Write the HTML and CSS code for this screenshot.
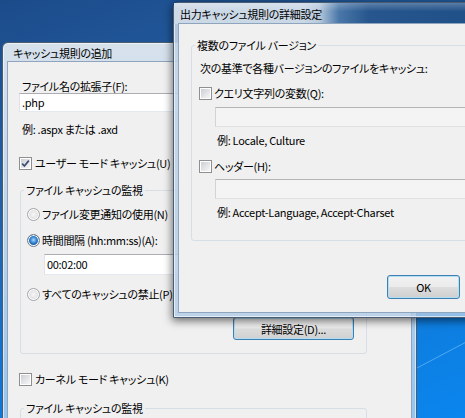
FILE: index.html
```html
<!DOCTYPE html>
<html lang="ja">
<head>
<meta charset="utf-8">
<link rel="stylesheet" href="styles.css">
</head>
<body>
<div class="desktop">
  <svg class="wallpaper" width="465" height="418" viewBox="0 0 465 418">
    <line x1="417" y1="368" x2="470" y2="340" stroke="#5fb4f4" stroke-width="1" opacity="0.8"/>
  </svg>

  <div class="win win-back">
    <div class="titlebar"><span class="title">キャッシュ規則の追加</span></div>
    <div class="client client-back">
      <div class="lbl ind14">ファイル名の拡張子(F):</div>
      <div class="tb tb-ext">.php</div>
      <div class="lbl ind14 hint-ext">例: .aspx または .axd</div>
      <div class="row row-user"><span class="cb"><svg width="9" height="9" viewBox="0 0 9 9"><polyline points="1.2,4.6 3.4,7 7.8,1.6" fill="none" stroke="#3d4d72" stroke-width="1.7"/></svg></span><span class="txt">ユーザー モード キャッシュ(U)</span></div>
      <fieldset class="group g1">
        <legend>ファイル キャッシュの監視</legend>
        <div class="row r1"><span class="rb"></span><span class="txt">ファイル変更通知の使用(N)</span></div>
        <div class="row r2"><span class="rb on"></span><span class="txt">時間間隔 (hh:mm:ss)(A):</span></div>
        <div class="tb tb-time">00:02:00</div>
        <div class="row r3"><span class="rb"></span><span class="txt">すべてのキャッシュの禁止(P)</span></div>
        <button class="btn btn-adv">詳細設定(D)...</button>
      </fieldset>
      <div class="row row-kernel"><span class="cb"></span><span class="txt">カーネル モード キャッシュ(K)</span></div>
      <fieldset class="group g2">
        <legend>ファイル キャッシュの監視</legend>
      </fieldset>
    </div>
  </div>

  <div class="win win-front">
    <div class="titlebar tb-active"><span class="title">出力キャッシュ規則の詳細設定</span></div>
    <div class="client client-front">
      <fieldset class="group gR">
        <legend>複数のファイル バージョン</legend>
        <div class="lbl intro">次の基準で各種バージョンのファイルをキャッシュ:</div>
        <div class="row rq"><span class="cb"></span><span class="txt">クエリ文字列の変数(Q):</span></div>
        <div class="tb tb-dis tq"></div>
        <div class="lbl hintR">例: Locale, Culture</div>
        <div class="row rh"><span class="cb"></span><span class="txt">ヘッダー(H):</span></div>
        <div class="tb tb-dis th"></div>
        <div class="lbl hintR">例: Accept-Language, Accept-Charset</div>
      </fieldset>
      <button class="btn btn-ok">OK</button>
    </div>
  </div>
</div>
</body>
</html>
```

FILE: styles.css
```css
* { box-sizing: border-box; }
html, body { margin: 0; padding: 0; }
body {
  width: 465px;
  height: 418px;
  overflow: hidden;
  font-family: "Noto Sans CJK JP", "Noto Sans", sans-serif;
  font-size: 11px;
  font-feature-settings: "palt";
  letter-spacing: -0.3px;
  color: #000;
}
.desktop {
  position: relative;
  width: 465px;
  height: 418px;
  overflow: hidden;
  background: linear-gradient(160deg, #1c4b8a 0%, #2361a6 35%, #1274d0 62%, #0a86ee 100%);
}
.wallpaper { position: absolute; left: 0; top: 0; }

.win {
  position: absolute;
  border: 1px solid #4b5d72;
  border-radius: 6px 6px 0 0;
  padding: 0 5px 5px;
}
.win-back {
  left: 2px;
  top: 42px;
  width: 415px;
  height: 420px;
  background: linear-gradient(#d6e1ec 0%, #c4d6e8 35%, #a6cbee 70%, #8cc2f0 100%);
  box-shadow: inset 0 0 0 1px rgba(255,255,255,0.55);
}
.win-front {
  left: 173px;
  top: 2px;
  width: 320px;
  height: 316px;
  background: linear-gradient(rgba(196,212,230,0.9), rgba(176,204,232,0.82));
  box-shadow: inset 0 0 0 1px rgba(255,255,255,0.6), 0 2px 9px 1px rgba(0,0,0,0.55);
}
.titlebar {
  height: 19px;
  display: flex;
  align-items: center;
  padding-left: 5px;
  line-height: 14px;
}
.tb-active {
  height: 21px;
  margin: 0 -5px;
  padding-left: 6px;
  background:
    linear-gradient(rgba(255,255,255,0.25), rgba(255,255,255,0) 40%),
    linear-gradient(90deg, #cdd9e6 0px, #c9d7e6 130px, #b7c9dd 145px, #4a77a8 165px, #26568d 195px, #1f4f87 100%);
}
.title { white-space: nowrap; }

.client {
  background: #f0f0f0;
  box-shadow: 0 0 0 1px #8fa5bd;
  overflow: hidden;
}
.client-back {
  height: 400px;
  padding-top: 17px;
}
.client-front {
  height: 288px;
  padding-top: 14px;
}

.lbl { line-height: 14px; white-space: nowrap; }
.ind14 { margin-left: 14px; }
.hint-ext { margin-top: 10px; }

.row {
  display: flex;
  align-items: center;
  height: 14px;
  line-height: 14px;
  white-space: nowrap;
}
.txt { white-space: nowrap; }

.tb {
  background: #fff;
  border: 1px solid;
  border-color: #abadb3 #dbdfe6 #e3e9ef #e2e3ea;
  line-height: 17px;
  padding-left: 2px;
  white-space: nowrap;
}
.tb-ext { margin-left: 11px; height: 19px; width: 330px; }
.tb-time { margin-top: 7px; margin-left: 23px; height: 21px; width: 300px; line-height: 19px; }
.tb-dis {
  background: #f4f4f4;
  border-color: #b5b5b5 #d3d3d3 #e1e1e1 #d3d3d3;
  height: 20px;
  margin-left: 23px;
  margin-right: 8px;
}

.cb {
  width: 13px;
  height: 13px;
  flex: none;
  border: 1px solid #8e8f8f;
  padding: 1px;
  background: linear-gradient(135deg, #cbcfd5, #f7f7f7) content-box, #fff;
  display: flex;
  align-items: center;
  justify-content: center;
  margin-right: 2px;
}
.cb svg { display: block; }

.rb {
  width: 13px;
  height: 13px;
  flex: none;
  border-radius: 50%;
  border: 1px solid #a3a5a8;
  background: radial-gradient(circle at 50% 50%, #f6f6f6 0, #e3e3e3 55%, #d2d2d2 100%);
  box-shadow: inset 0 0 0 1px #fff;
  margin-right: 2px;
}
.rb.on {
  border-color: #6f7c8a;
  background: radial-gradient(circle at 50% 45%, #a8dcff 0, #3c8ad6 35%, #0f4f9a 65%, #e9e9e9 70%, #f4f4f4 100%);
}

.row-user { margin-top: 20px; margin-left: 11px; }
.row-user .cb { margin-right: 3px; }
.row-kernel { margin-top: 18px; margin-left: 11px; }
.row-kernel .cb { margin-right: 3px; }

.group {
  border: 1px solid #d5dfe5;
  border-radius: 3px;
  margin: 0;
  padding: 0;
  min-width: 0;
}
.group legend {
  padding: 0 2px;
  margin-left: 3px;
  line-height: 14px;
  white-space: nowrap;
}
.g1 {
  margin-top: 13px;
  margin-left: 12px;
  width: 347px;
  padding-bottom: 13px;
}
.r1 { margin-top: 10px; margin-left: 6px; }
.r2 { margin-top: 12px; margin-left: 6px; }
.r3 { margin-top: 12px; margin-left: 6px; }
.btn {
  display: block;
  font: inherit;
  letter-spacing: inherit;
  color: #000;
  border: 1px solid #3c7fb1;
  border-radius: 3px;
  background: linear-gradient(#f2f2f2 0%, #ebebeb 48%, #dddddd 52%, #cfcfcf 100%);
  box-shadow: inset 0 0 0 1px #b4def4;
  padding: 0;
  line-height: 14px;
}
.btn-adv {
  margin-top: 16px;
  margin-left: 212px;
  width: 121px;
  height: 23px;
}
.g2 {
  margin-top: 15px;
  margin-left: 12px;
  width: 347px;
  height: 60px;
}

.gR {
  margin: 0 12px;
  padding-bottom: 21px;
}
.intro { margin-top: 9px; margin-left: 8px; }
.rq { margin-top: 11px; margin-left: 7px; }
.tq { margin-top: 7px; }
.hintR { margin-top: 6px; margin-left: 25px; }
.rh { margin-top: 12px; margin-left: 7px; }
.th { margin-top: 6px; }
.btn-ok {
  margin-top: 34px;
  margin-left: 208px;
  width: 73px;
  height: 24px;
}
```
